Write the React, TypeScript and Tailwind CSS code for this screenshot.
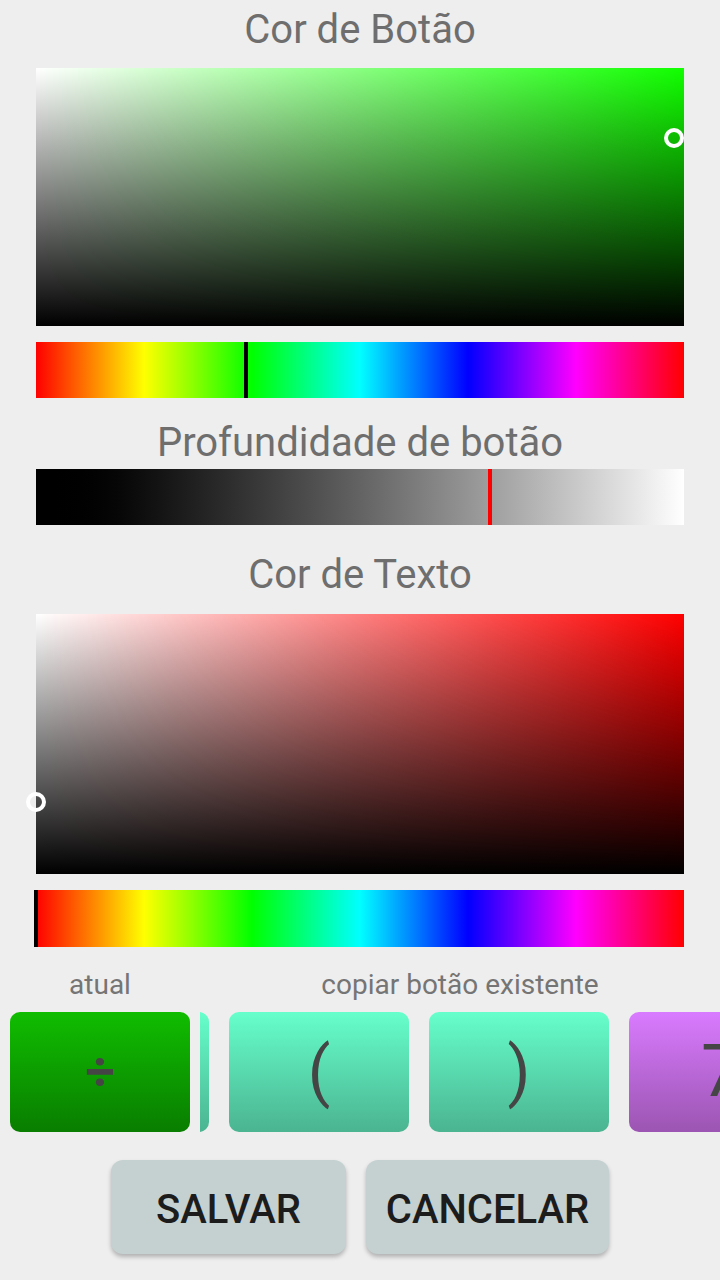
import React from "react";

const HUE =
  "linear-gradient(to right, #ff0000 0%, #ffff00 16.66%, #00ff00 33.33%, #00ffff 50%, #0000ff 66.66%, #ff00ff 83.33%, #ff0000 100%)";

function SVBox({ hue, markerX, markerY, height }: { hue: string; markerX: number; markerY: number; height: string }) {
  return (
    <div className={`relative w-full ${height}`} style={{ background: hue }}>
      <div className="absolute inset-0 bg-gradient-to-r from-white to-transparent" />
      <div className="absolute inset-0 bg-gradient-to-b from-transparent to-black" />
      <div
        className="absolute w-[20px] h-[20px] rounded-full border-[4px] border-white -translate-x-1/2 -translate-y-1/2"
        style={{ left: `${markerX}%`, top: `${markerY}%` }}
      />
    </div>
  );
}

function HueBar({ pos, height }: { pos: number; height: string }) {
  return (
    <div className={`relative w-full ${height}`} style={{ background: HUE }}>
      <div className="absolute top-0 bottom-0 w-[4px] bg-black" style={{ left: `${pos}px` }} />
    </div>
  );
}

function Title({ children }: { children: React.ReactNode }) {
  return <div className="text-center text-[40px] leading-[44px] text-[#6e6e6e]">{children}</div>;
}

function KeyButton({ label, colors, textSize }: { label: string; colors: string; textSize: string }) {
  return (
    <div
      className={`shrink-0 w-[180px] h-[120px] rounded-[10px] flex items-center justify-center bg-gradient-to-b ${colors}`}
    >
      <span className={`${textSize} text-[#454545] leading-none`}>{label}</span>
    </div>
  );
}

export default function App() {
  return (
    <div className="w-[720px] h-[1280px] bg-[#eeeeee] overflow-hidden" style={{ fontFamily: "Roboto, 'Noto Sans', sans-serif" }}>
      <div className="px-[36px] pt-[8px] flex flex-col">
        <Title>Cor de Botão</Title>
        <div className="mt-[16px]">
          <SVBox hue="#11ff00" markerX={98.5} markerY={27} height="h-[258px]" />
        </div>
        <div className="mt-[16px]">
          <HueBar pos={208} height="h-[56px]" />
        </div>

        <div className="mt-[23px]">
          <Title>Profundidade de botão</Title>
        </div>
        <div className="mt-[4px] relative h-[56px] w-full bg-gradient-to-r from-black to-white">
          <div className="absolute top-0 bottom-0 left-[452px] w-[4px] bg-[#ff0000]" />
        </div>

        <div className="mt-[28px]">
          <Title>Cor de Texto</Title>
        </div>
        <div className="mt-[17px]">
          <SVBox hue="#ff0000" markerX={0} markerY={72.3} height="h-[260px]" />
        </div>
        <div className="mt-[16px]">
          <HueBar pos={-2} height="h-[57px]" />
        </div>
      </div>

      {/* labels */}
      <div className="mt-[23px] flex text-[28px] leading-[30px] text-[#757575]">
        <div className="w-[200px] text-center">atual</div>
        <div className="w-[520px] text-center">copiar botão existente</div>
      </div>

      {/* button row */}
      <div className="mt-[12px] flex">
        <div className="ml-[10px] w-[190px] shrink-0">
          <KeyButton label="÷" colors="from-[#10bd00] to-[#097e00]" textSize="text-[52px] font-bold" />
        </div>
        <div className="flex-1 overflow-hidden">
          <div className="flex gap-[20px] ml-[-171px]">
            <KeyButton label="" colors="from-[#66ffcc] to-[#4bb491]" textSize="text-[64px]" />
            <KeyButton label="(" colors="from-[#66ffcc] to-[#4bb491]" textSize="text-[66px]" />
            <KeyButton label=")" colors="from-[#66ffcc] to-[#4bb491]" textSize="text-[66px]" />
            <div className="shrink-0 w-[180px] h-[120px] rounded-[10px] flex items-center pl-[72px] bg-gradient-to-b from-[#d97bff] to-[#9c55b2]">
              <span className="text-[72px] text-[#454545] leading-none">7</span>
            </div>
          </div>
        </div>
      </div>

      {/* actions */}
      <div className="mt-[28px] flex justify-center gap-[20px]">
        <button className="w-[235px] h-[94px] pt-[6px] rounded-[12px] bg-[#c5d1d1] shadow-[0_3px_4px_rgba(0,0,0,0.25)] text-[40px] font-medium text-[#1c1c1c]">
          SALVAR
        </button>
        <button className="w-[243px] h-[94px] pt-[6px] rounded-[12px] bg-[#c5d1d1] shadow-[0_3px_4px_rgba(0,0,0,0.25)] text-[40px] font-medium text-[#1c1c1c]">
          CANCELAR
        </button>
      </div>
    </div>
  );
}
